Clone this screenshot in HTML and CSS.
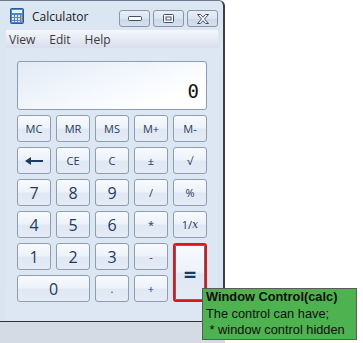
FILE: index.html
```html
<!DOCTYPE html>
<html lang="en">
<head>
    <meta charset="UTF-8">
    <title>Calculator</title>
    <link rel="stylesheet" href="styles.css">
</head>
<body>
    <div class="screen">
        <div class="left">
            <div class="window">
                <div class="titlebar">
                    <svg class="app-icon" width="14" height="16" viewBox="0 0 14 16">
                        <rect x="0.5" y="0.5" width="13" height="15" rx="1" fill="#4f86c6" stroke="#2c5a94"/>
                        <rect x="2" y="2" width="10" height="3" fill="#e8f1fb"/>
                        <g fill="#dce8f6">
                            <rect x="2" y="7" width="2" height="2"/><rect x="5" y="7" width="2" height="2"/><rect x="8" y="7" width="2" height="2"/>
                            <rect x="2" y="10" width="2" height="2"/><rect x="5" y="10" width="2" height="2"/><rect x="8" y="10" width="2" height="2"/>
                            <rect x="2" y="13" width="2" height="1"/><rect x="5" y="13" width="2" height="1"/><rect x="8" y="13" width="2" height="1"/>
                        </g>
                        <rect x="11" y="7" width="1" height="7" fill="#f0a040"/>
                    </svg>
                    <span class="title">Calculator</span>
                    <div class="caption-buttons">
                        <div class="cap-btn">
                            <svg width="14" height="5" viewBox="0 0 14 5"><rect x="0.5" y="0.5" width="13" height="4" rx="1" fill="#fff" stroke="#3d4f66"/></svg>
                        </div>
                        <div class="cap-btn">
                            <svg width="11" height="9" viewBox="0 0 11 9"><rect x="0.5" y="0.5" width="10" height="8" rx="1" fill="#fff" stroke="#3d4f66"/><rect x="3" y="3" width="5" height="3" fill="none" stroke="#3d4f66"/></svg>
                        </div>
                        <div class="cap-btn">
                            <svg width="14" height="10" viewBox="0 0 14 10"><path d="M1.5 0.5h3l2.5 2.8 2.5-2.8h3l-4 4.5 4 4.5h-3l-2.5-2.8-2.5 2.8h-3l4-4.5z" fill="#fff" stroke="#3d4f66" stroke-linejoin="round"/></svg>
                        </div>
                    </div>
                </div>
                <div class="menubar">
                    <span>View</span>
                    <span>Edit</span>
                    <span>Help</span>
                </div>
                <div class="client">
                    <div class="display">0</div>
                    <div class="keys">
                        <div class="key small">MC</div>
                        <div class="key small">MR</div>
                        <div class="key small">MS</div>
                        <div class="key small">M+</div>
                        <div class="key small">M-</div>

                        <div class="key">
                            <svg width="18" height="8" viewBox="0 0 18 8"><path d="M0 4 L6 0 V3 H18 V5 H6 V8 Z" fill="#1e3a5f"/></svg>
                        </div>
                        <div class="key small">CE</div>
                        <div class="key small">C</div>
                        <div class="key small">±</div>
                        <div class="key small">√</div>

                        <div class="key digit">7</div>
                        <div class="key digit">8</div>
                        <div class="key digit">9</div>
                        <div class="key small">/</div>
                        <div class="key small">%</div>

                        <div class="key digit">4</div>
                        <div class="key digit">5</div>
                        <div class="key digit">6</div>
                        <div class="key small">*</div>
                        <div class="key small recip">1/<i>x</i></div>

                        <div class="key digit">1</div>
                        <div class="key digit">2</div>
                        <div class="key digit">3</div>
                        <div class="key small">-</div>
                        <div class="key equals">=</div>

                        <div class="key digit zero">0</div>
                        <div class="key small">.</div>
                        <div class="key small">+</div>
                    </div>
                </div>
            </div>
            <div class="taskbar"></div>
        </div>
        <div class="tooltip">
            <b>Window Control(calc)</b>
            <span>The control can have;</span>
            <span>&nbsp;* window control hidden</span>
        </div>
    </div>
</body>
</html>
```

FILE: styles.css
```css
body {
    margin: 0;
    background: #fff;
    font-family: "Open Sans", "Noto Sans", sans-serif;
}

.screen {
    position: relative;
    width: 363px;
    height: 343px;
    overflow: hidden;
}

.left {
    width: 225px;
    display: flex;
    flex-direction: column;
}

.window {
    height: 320px;
    background: linear-gradient(180deg, #dbe6f3 0%, #d9e4f1 100%);
    border-top: 1px solid #6b7a8c;
    border-right: 2px solid #3a3f46;
    border-bottom: 1px solid #2f3338;
    border-top-right-radius: 6px;
    padding: 0 5px 0 6px;
    display: flex;
    flex-direction: column;
}

.titlebar {
    height: 28px;
    display: flex;
    align-items: center;
    padding-top: 1px;
}

.app-icon {
    margin-left: 4px;
    margin-right: 8px;
}

.title {
    font-size: 12px;
    color: #1a1a1a;
}

.caption-buttons {
    margin-left: auto;
    display: flex;
    gap: 3px;
    margin-top: 8px;
    align-self: flex-start;
}

.cap-btn {
    width: 29px;
    height: 15px;
    border: 1px solid #8796aa;
    border-radius: 3px;
    background: linear-gradient(180deg, #e8eff8 0%, #dbe4f0 50%, #ccd8e8 51%, #d6e0ee 100%);
    display: flex;
    align-items: center;
    justify-content: center;
}

.menubar {
    height: 18px;
    display: flex;
    align-items: center;
    gap: 14px;
    padding-left: 3px;
    font-size: 12px;
    color: #3a3a3a;
    background: linear-gradient(180deg, #f5f7fb 0%, #e4e8f3 60%, #d9deec 100%);
}

.client {
    flex: 1;
    background: #dde7f3;
    padding: 13px 0 0 11px;
}

.display {
    width: 188px;
    height: 39px;
    padding-bottom: 8px;
    border: 1px solid #8e9cb0;
    border-radius: 3px;
    background: linear-gradient(160deg, #e1eaf6 0%, #f3f7fc 45%, #ffffff 80%);
    font-family: "DejaVu Sans Mono", monospace;
    font-size: 19px;
    line-height: 1;
    color: #111;
    display: flex;
    align-items: flex-end;
    justify-content: flex-end;
}

.display::after {
    content: "";
    width: 7px;
}

.keys {
    margin-top: 5px;
    display: grid;
    grid-template-columns: repeat(5, 34px);
    grid-auto-rows: 27px;
    gap: 5px;
}

.key {
    box-sizing: border-box;
    border: 1px solid #8f9db1;
    border-radius: 3px;
    background: linear-gradient(180deg, #f7fafd 0%, #eef3fa 48%, #e0e8f3 52%, #e4ebf5 100%);
    display: flex;
    align-items: center;
    justify-content: center;
    color: #1e3a5f;
}

.small {
    font-size: 11px;
}

.digit {
    font-size: 16px;
}

.zero {
    grid-column: span 2;
}

.recip i {
    font-family: "DejaVu Serif", serif;
    font-size: 11px;
}

.equals {
    grid-row: span 2;
    font-size: 22px;
    font-weight: bold;
    border: 2px solid #e0141b;
    box-shadow: inset 0 0 0 1px #6b6b6b;
}

.taskbar {
    height: 23px;
    background: #d5dbe5;
}

.tooltip {
    position: absolute;
    left: 202px;
    top: 288px;
    width: 150px;
    height: 50px;
    background: #4db24f;
    border: 1px solid #5b5b5b;
    padding: 0 0 0 3px;
    display: flex;
    flex-direction: column;
    font-family: "Liberation Sans", sans-serif;
    font-size: 12.8px;
    line-height: 16.5px;
    color: #101010;
    white-space: nowrap;
}
```
